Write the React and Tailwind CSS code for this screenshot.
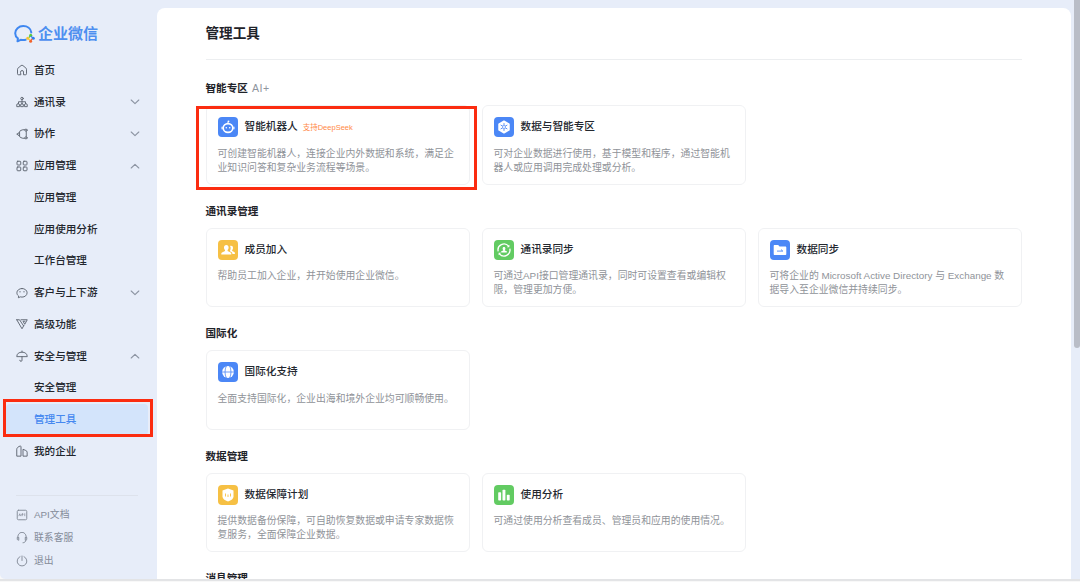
import React from "react";

const Stroke = ({ children }) => (
  <svg
    viewBox="0 0 24 24"
    className="w-[12px] h-[12px] shrink-0"
    fill="none"
    stroke="currentColor"
    strokeWidth="1.900"
    strokeLinecap="round"
    strokeLinejoin="round"
  >
    {children}
  </svg>
);

const HomeIcon = () => (
  <Stroke>
    <path d="M9 21.5H5a2 2 0 0 1-2-2v-9a3 3 0 0 1 1.100-2.300l6-5a3 3 0 0 1 3.800 0l6 5A3 3 0 0 1 21 10.500v9a2 2 0 0 1-2 2h-4V16a3 3 0 0 0-6 0z" />
  </Stroke>
);

const ContactsIcon = () => (
  <Stroke>
    <circle cx="12" cy="5" r="2.500" />
    <path d="M12 8v8M5 15v-3.500h14V15" />
    <path d="M1.500 20.500v-2.500a2.700 2.700 0 0 1 5.400 0v2.500zM9.300 20.500v-2.500a2.700 2.700 0 0 1 5.400 0v2.500zM17.100 20.500v-2.500a2.700 2.700 0 0 1 5.400 0v2.500z" />
  </Stroke>
);

const CollabIcon = () => (
  <Stroke>
    <path d="M17.500 3.500h-4a8 8 0 0 0-7.500 6M17.500 20.500h-4a8 8 0 0 1-7.500-5.500M20.500 7v10" />
    <path d="M6.500 9.500L1.500 12.300l5 3z" />
    <circle cx="20" cy="4.300" r="2.200" />
    <circle cx="20" cy="19.700" r="2.200" />
  </Stroke>
);

const AppsIcon = () => (
  <Stroke>
    <rect x="2" y="2.500" width="7.500" height="7.500" rx="1.500" />
    <rect x="14.500" y="2.500" width="7.500" height="7.500" rx="1.500" />
    <rect x="2" y="14" width="7.500" height="7.500" rx="1.500" />
    <rect x="14.500" y="14" width="7.500" height="7.500" rx="1.500" />
  </Stroke>
);

const ChatIcon = () => (
  <Stroke>
    <path d="M12 3C6.200 3 1.800 6.800 1.800 11.600c0 2.600 1.300 4.900 3.400 6.500L4.800 21.500l3.800-1.800c1.100.3 2.200.5 3.400.5 5.800 0 10.200-3.800 10.200-8.600S17.800 3 12 3z" />
    <path d="M8 9v1M16 9v1" />
  </Stroke>
);

const AdvancedIcon = () => (
  <Stroke>
    <path d="M1.500 3.500h5.500l8 12M1.500 3.500L12 21.500l4-7" />
    <path d="M10 3.500h12.500l-5 9-3.500-6h4" />
  </Stroke>
);

const UmbrellaIcon = () => (
  <Stroke>
    <path d="M1.500 12.500C1.500 7.500 6 4.300 12 4.300s10.500 3.200 10.500 8.200zM12 2v2M12 13v7.500a2.200 2.200 0 0 1-4.400 0" />
  </Stroke>
);

const CompanyIcon = () => (
  <Stroke>
    <path d="M1.500 21.500V8.500c0-2.500 3-5.500 7-6.500.8 0 1.500.5 1.500 1.500v18zM14 21.500V8.500l5.500 2.500a4 4 0 0 1 2.800 3.500v7z" />
  </Stroke>
);

const ApiIcon = () => (
  <Stroke>
    <rect x="2.500" y="2.500" width="19" height="19" rx="2.500" />
    <path d="M6 13.500l1.500-4 1.500 4M12 13.500v-4h2v2h-2M17.500 9.500v4" strokeWidth="1.500" />
  </Stroke>
);

const ServiceIcon = () => (
  <Stroke>
    <path d="M4 12a8.500 8.500 0 1 1 16 0M14 21.500c3 0 5-1.500 6-5" />
    <path d="M2.500 11.500v3.500l3 1.500v-5zM21.500 11.500v3.500l-3 1.500v-5z" />
  </Stroke>
);

const PowerIcon = () => (
  <Stroke>
    <path d="M8 3.300a9.700 9.700 0 1 0 8 0M12 2v9" />
  </Stroke>
);

const Chevron = ({ up }) => (
  <svg
    viewBox="0 0 10 6"
    className={up ? "w-[10px] h-[6px] rotate-180" : "w-[10px] h-[6px]"}
    fill="none"
    stroke="#8d95a3"
    strokeWidth="1.100"
    strokeLinecap="round"
    strokeLinejoin="round"
  >
    <path d="M1.200 1L5 4.700L8.800 1" />
  </svg>
);

const Logo = () => (
  <svg viewBox="0 0 21 18" className="w-[21px] h-[18px]" fill="none">
    <path
      d="M17.300 7.500C16.800 3.600 13.400 1.100 9.200 1.100C4.700 1.100 1.200 4.200 1.200 8.200c0 2.100 1 3.900 2.700 5.200L3.500 16.300l3.200-1.500c1.700.4 3.500.4 5-.1"
      stroke="#3f87f0"
      strokeWidth="2"
      strokeLinecap="round"
      strokeLinejoin="round"
    />
    <circle cx="16.700" cy="10.200" r="1.500" fill="#5ac83c" />
    <circle cx="19.300" cy="13.200" r="1.500" fill="#2f7df0" />
    <circle cx="16.600" cy="16.200" r="1.500" fill="#f2622c" />
    <circle cx="13.700" cy="13.200" r="1.500" fill="#f7c331" />
    <path d="M15 12.500l1.400-1.700" stroke="#5ac83c" strokeWidth="1.200" />
    <path d="M17 11.200l1.600 1.500" stroke="#2f7df0" strokeWidth="1.200" />
    <path d="M18.300 13.900l-1.500 1.600" stroke="#f2622c" strokeWidth="1.200" />
    <path d="M14.300 13.700l1.700 1.700" stroke="#f7c331" strokeWidth="1.200" />
  </svg>
);

const RobotGlyph = () => (
  <>
    <path d="M10 6V4.700" stroke="#fff" strokeWidth="1" />
    <circle cx="10.500" cy="4.300" r="0.900" fill="#fff" />
    <ellipse cx="10" cy="11" rx="4.800" ry="4.400" stroke="#fff" strokeWidth="1.600" fill="none" />
    <path d="M4.100 9.800v2.400M15.900 9.800v2.400" stroke="#fff" strokeWidth="1.200" />
    <circle cx="8.300" cy="10.800" r="0.800" fill="#fff" />
    <circle cx="11.700" cy="10.800" r="0.800" fill="#fff" />
  </>
);

const HexGlyph = () => (
  <>
    <path
      d="M10 4.200l5 2.900v5.800l-5 2.900-5-2.900V7.100z"
      fill="#fff"
      stroke="#fff"
      strokeWidth="1.500"
      strokeLinejoin="round"
    />
    <path
      d="M10 6.500v2M10 11.500v2M7 8.200l1.700 1M11.300 10.800l1.700 1M13 8.200l-1.700 1M8.700 10.800l-1.700 1"
      stroke="#4b87f6"
      strokeWidth="0.900"
      strokeLinecap="round"
    />
    <circle cx="10" cy="10" r="1.500" stroke="#4b87f6" strokeWidth="0.600" fill="#fff" />
  </>
);

const MembersGlyph = () => (
  <g fill="#fff">
    <path d="M8.300 5c1.500 0 2.300 1.100 2.300 2.600 0 1.100-.4 2-1 2.500v1l3 1.400c.5.200.7.600.7 1.100v.9h-10v-.9c0-.5.2-.9.7-1.100l3-1.400v-1C6.400 9.600 6 8.700 6 7.600 6 6.100 6.800 5 8.300 5z" />
    <path d="M12 6.100c.3-.2.700-.3 1.100-.3 1.200 0 1.900.9 1.900 2.100 0 .9-.3 1.600-.8 2.100v.9l2.100 1.200c.4.200.6.600.6 1v.9h-2.500c0-1.300-.4-1.700-1.200-2.100l-1.200-.6v-.6c.8-1.400.9-3.300 0-4.600z" />
  </g>
);

const SyncGlyph = () => (
  <>
    <path d="M4.200 11.400A6 6 0 0 1 14.600 6.100M15.800 8.600A6 6 0 0 1 5.400 13.900" stroke="#fff" strokeWidth="1.300" fill="none" />
    <path d="M15.400 4.700v2.600h-2.600zM4.600 15.300v-2.600h2.600z" fill="#fff" />
    <path d="M10 6.900c.9 0 1.400.7 1.400 1.500 0 .7-.3 1.200-.6 1.500v.5l2 .9v1.100H7.200v-1.100l2-.9v-.5c-.3-.3-.6-.8-.6-1.500 0-.8.5-1.500 1.400-1.500z" fill="#fff" />
  </>
);

const FolderGlyph = () => (
  <>
    <path d="M3.700 6c0-.6.4-1 1-1h3.500l1.300 1.400h5.800c.6 0 1 .4 1 1v6.700c0 .6-.4 1-1 1H4.700c-.6 0-1-.4-1-1z" fill="#fff" />
    <path d="M7 11.100h5.800l-1.800-1.500" stroke="#4b87f6" strokeWidth="0.900" fill="none" />
  </>
);

const GlobeGlyph = () => (
  <>
    <circle cx="10" cy="10" r="5.900" fill="#fff" />
    <path d="M4 10h12M8.300 4c-1.700 3.600-1.700 8.400 0 12M11.700 4c1.700 3.600 1.700 8.400 0 12" stroke="#4b87f6" strokeWidth="0.800" fill="none" />
  </>
);

const ShieldGlyph = () => (
  <>
    <path d="M10 3.600l5.500 1.900v6c0 2.200-2.200 3.900-5.500 5.100-3.300-1.200-5.500-2.900-5.500-5.100v-6z" fill="#fff" />
    <path d="M7.500 8.500v3M10 9.500v2.500M12.500 8.500v3" stroke="#f6c044" strokeWidth="0.900" />
  </>
);

const BarsGlyph = () => (
  <g fill="#fff">
    <rect x="4.200" y="7.300" width="2.900" height="8.200" rx="0.700" />
    <rect x="8.500" y="4.700" width="2.900" height="10.800" rx="0.700" />
    <rect x="12.800" y="9.800" width="2.900" height="5.700" rx="0.700" />
  </g>
);

const menu = [
  { text: "首页", icon: <HomeIcon /> },
  { text: "通讯录", icon: <ContactsIcon />, arrow: "down" },
  { text: "协作", icon: <CollabIcon />, arrow: "down" },
  { text: "应用管理", icon: <AppsIcon />, arrow: "up" },
  { text: "应用管理", sub: true },
  { text: "应用使用分析", sub: true },
  { text: "工作台管理", sub: true },
  { text: "客户与上下游", icon: <ChatIcon />, arrow: "down" },
  { text: "高级功能", icon: <AdvancedIcon /> },
  { text: "安全与管理", icon: <UmbrellaIcon />, arrow: "up" },
  { text: "安全管理", sub: true },
  { text: "管理工具", sub: true, active: true },
  { text: "我的企业", icon: <CompanyIcon /> },
];

const links = [
  { text: "API文档", icon: <ApiIcon /> },
  { text: "联系客服", icon: <ServiceIcon /> },
  { text: "退出", icon: <PowerIcon /> },
];

const sections = [
  {
    title: "智能专区",
    extra: true,
    cards: [
      {
        title: "智能机器人",
        tag: "支持DeepSeek",
        marked: true,
        color: "bg-[#4b87f6]",
        glyph: <RobotGlyph />,
        lines: ["可创建智能机器人，连接企业内外数据和系统，满足企", "业知识问答和复杂业务流程等场景。"],
      },
      {
        title: "数据与智能专区",
        color: "bg-[#4b87f6]",
        glyph: <HexGlyph />,
        lines: ["可对企业数据进行使用，基于模型和程序，通过智能机", "器人或应用调用完成处理或分析。"],
      },
    ],
  },
  {
    title: "通讯录管理",
    cards: [
      {
        title: "成员加入",
        color: "bg-[#f6c044]",
        glyph: <MembersGlyph />,
        lines: ["帮助员工加入企业，并开始使用企业微信。"],
      },
      {
        title: "通讯录同步",
        color: "bg-[#62cb62]",
        glyph: <SyncGlyph />,
        lines: ["可通过API接口管理通讯录，同时可设置查看或编辑权", "限，管理更加方便。"],
      },
      {
        title: "数据同步",
        color: "bg-[#4b87f6]",
        glyph: <FolderGlyph />,
        lines: ["可将企业的 Microsoft Active Directory 与 Exchange 数", "据导入至企业微信并持续同步。"],
      },
    ],
  },
  {
    title: "国际化",
    cards: [
      {
        title: "国际化支持",
        color: "bg-[#4b87f6]",
        glyph: <GlobeGlyph />,
        lines: ["全面支持国际化，企业出海和境外企业均可顺畅使用。"],
      },
    ],
  },
  {
    title: "数据管理",
    cards: [
      {
        title: "数据保障计划",
        color: "bg-[#f6c044]",
        glyph: <ShieldGlyph />,
        lines: ["提供数据备份保障，可自助恢复数据或申请专家数据恢", "复服务，全面保障企业数据。"],
      },
      {
        title: "使用分析",
        color: "bg-[#62cb62]",
        glyph: <BarsGlyph />,
        lines: ["可通过使用分析查看成员、管理员和应用的使用情况。"],
      },
    ],
  },
  { title: "消息管理", cards: [] },
];

const MenuItem = ({ item }) => {
  if (item.active) {
    return (
      <div className="relative h-[31.75px] pl-[6px] pr-[9px]">
        <div className="h-[31px] pt-px pl-[28px] flex items-center rounded-[4px] bg-[#d3e4fb] text-[#4588f0]">
          {item.text}
        </div>
        <div className="absolute -top-[5px] left-[3px] w-[150px] h-[38px] border-[3px] border-[#fb2c10]"></div>
      </div>
    );
  }

  return (
    <div className="h-[31.75px] pl-[16px] pr-[17px] flex items-center">
      <div className="w-[18px] text-[#5f6672]">{item.icon}</div>
      <span className="flex-1 pt-px">{item.text}</span>
      {item.arrow && <Chevron up={item.arrow === "up"} />}
    </div>
  );
};

const Card = ({ card }) => (
  <div className="relative h-[79.500px] rounded-[6px] border border-[#f0f1f3] pt-[11px] pl-[11px]">
    <div className="flex items-center h-[20px]">
      <div className={`w-[20px] h-[20px] rounded-[4px] ${card.color}`}>
        <svg viewBox="0 0 20 20" className="w-[20px] h-[20px]">
          {card.glyph}
        </svg>
      </div>
      <span className="ml-[7px] text-[10.650px] font-medium text-[#24282f]">{card.title}</span>
      {card.tag && <span className="ml-[5px] text-[7.500px] text-[#ff8a48]">{card.tag}</span>}
    </div>
    <div className="mt-[9.300px] text-[9.850px] leading-[14px] text-[#8f9399] whitespace-nowrap">
      {card.lines.map((line) => (
        <p key={line}>{line}</p>
      ))}
    </div>
    {card.marked && (
      <div className="absolute top-0 -left-[11px] w-[281px] h-[84px] border-[3px] border-[#fb2c10]"></div>
    )}
  </div>
);

const App = () => {
  return (
    <div className="w-[1080px] h-[582px] flex flex-col overflow-hidden bg-[#f8f8f8] font-['Liberation_Sans','Noto_Sans_CJK_SC',sans-serif]">
      <div className="h-[579px] flex overflow-hidden rounded-bl-[5px] bg-[#e7edf9]">
        {/* Sidebar */}
        <aside className="w-[156.500px] shrink-0 flex flex-col">
          <div className="h-[54.400px] pt-[25px] pl-[14px] flex items-start">
            <Logo />
            <span className="ml-[3px] text-[15px] leading-[18px] font-bold text-[#4e8ff0]">企业微信</span>
          </div>
          <nav className="text-[10.600px] font-medium text-[#22262d]">
            {menu.map((item, index) => (
              <MenuItem key={index} item={item} />
            ))}
          </nav>
          <div className="mt-[28px] mx-[16px] mr-[19px] border-t border-[#dde2ec]"></div>
          <div className="mt-[7.500px] text-[9.820px] text-[#858c99]">
            {links.map((link) => (
              <div key={link.text} className="h-[23px] pl-[16px] flex items-center">
                <div className="w-[18px]">{link.icon}</div>
                <span>{link.text}</span>
              </div>
            ))}
          </div>
        </aside>

        {/* Content */}
        <main className="mt-[8px] w-[914.500px] shrink-0 rounded-t-[8px] bg-white pl-[49px] pr-[49.500px] overflow-hidden">
          <h1 className="h-[51.500px] border-b border-[#eceef0] text-[13.600px] leading-[52px] font-bold text-[#1f2329]">
            管理工具
          </h1>
          <div className="pt-[19.800px]">
            {sections.map((section) => (
              <section key={section.title} className="h-[122.500px]">
                <h2 className="h-[26px] leading-[18px] text-[10.600px] font-bold text-[#1f2329]">
                  {section.title}
                  {section.extra && (
                    <span className="ml-[4px] font-normal text-[#8f959e] tracking-[0.500px]">AI+</span>
                  )}
                </h2>
                <div className="grid grid-cols-3 gap-[12px]">
                  {section.cards.map((card) => (
                    <Card key={card.title} card={card} />
                  ))}
                </div>
              </section>
            ))}
          </div>
        </main>

        {/* Scrollbar */}
        <div className="flex-1 flex justify-end">
          <div className="w-[6px] h-[348px] rounded-b-[3px] bg-[#b9bdc7]"></div>
        </div>
      </div>
      <div className="h-[2px] bg-[#e3e4e6]"></div>
    </div>
  );
};

export default App;
